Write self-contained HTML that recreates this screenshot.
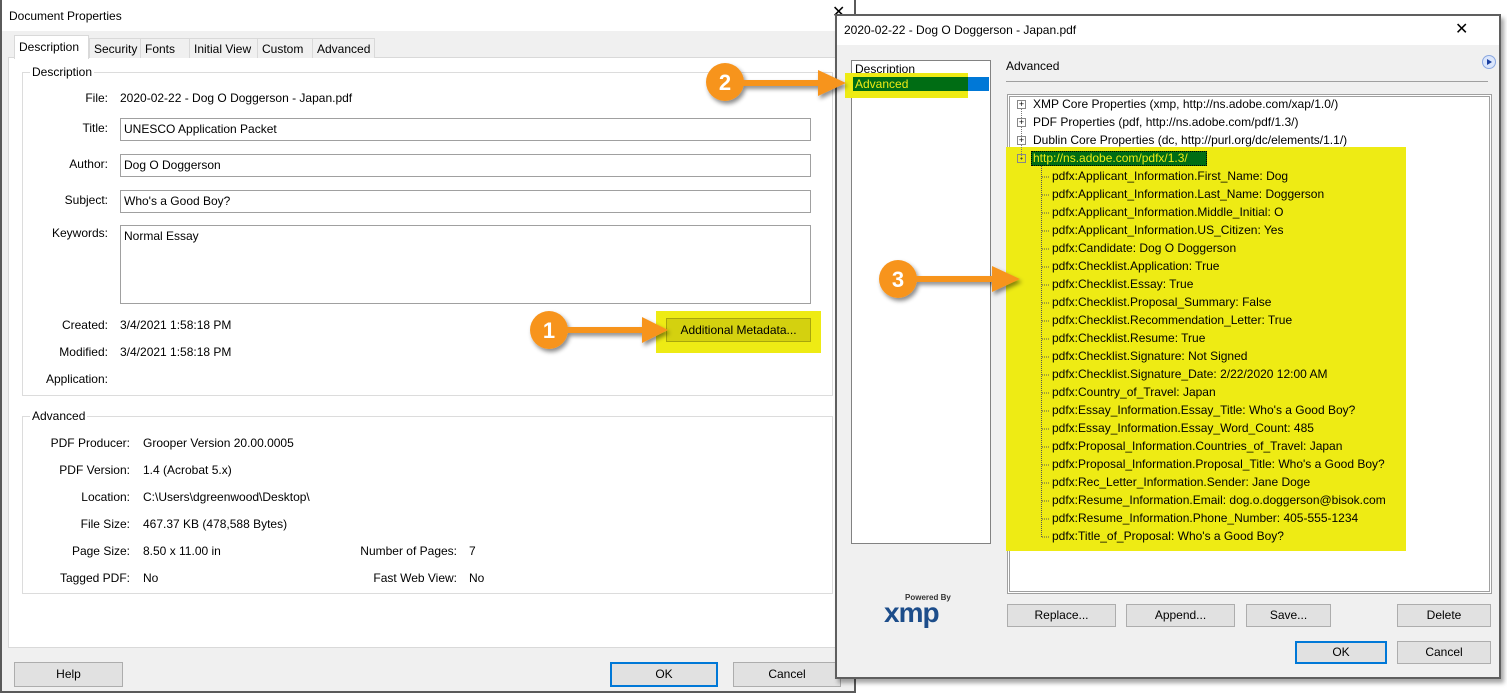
<!DOCTYPE html>
<html><head><meta charset="utf-8"><style>
*{box-sizing:border-box;margin:0;padding:0}
body{width:1507px;height:693px;background:#fff;position:relative;overflow:hidden;font-family:"Liberation Sans",sans-serif;font-size:12px;color:#000}
.a{position:absolute;white-space:nowrap}
.lbl{position:absolute;text-align:right;white-space:nowrap}
.inp{position:absolute;background:#fff;border:1px solid #a0a0a0;padding:3px 3px;}
.btn{position:absolute;background:#e1e1e1;border:1px solid #adadad;text-align:center;line-height:22px}
.grp{position:absolute;border:1px solid #dcdcdc}
.grp span{position:absolute;top:-8px;left:7px;background:#fff;padding:0 2px}
.tab{position:absolute;top:38px;height:20px;border:1px solid #d9d9d9;border-bottom:none;background:#f0f0f0;padding:3px 4px 0 4px}
.row{position:absolute;left:1052px;white-space:nowrap}
.dot{position:absolute;border-top:1px dotted #777;width:8px}
</style></head><body>
<!-- LEFT DIALOG -->
<div class="a" style="left:0;top:0;width:856px;height:693px;background:#f0f0f0;border:2px solid #5a5a5a;border-top:none"></div>
<div class="a" style="left:2px;top:0;width:852px;height:31px;background:#fff"></div>
<div class="a" style="left:9px;top:9px;font-size:12px">Document Properties</div>
<div class="a" style="left:832px;top:2px;font-size:16px">✕</div>
<div class="a" style="left:8px;top:57px;width:838px;height:591px;background:#fff;border:1px solid #d9d9d9"></div>
<div class="tab" style="left:89px;width:52px">Security</div>
<div class="tab" style="left:140px;width:50px">Fonts</div>
<div class="tab" style="left:189px;width:69px">Initial View</div>
<div class="tab" style="left:257px;width:56px">Custom</div>
<div class="tab" style="left:312px;width:63px">Advanced</div>
<div class="tab" style="left:14px;top:35px;width:75px;height:24px;background:#fff;padding-top:4px">Description</div>

<div class="grp" style="left:22px;top:72px;width:811px;height:324px"><span>Description</span></div>
<div class="lbl" style="right:1399px;top:91px">File:</div>
<div class="a" style="left:120px;top:91px">2020-02-22 - Dog O Doggerson - Japan.pdf</div>
<div class="lbl" style="right:1399px;top:121px">Title:</div>
<div class="inp" style="left:120px;top:118px;width:691px;height:23px">UNESCO Application Packet</div>
<div class="lbl" style="right:1399px;top:157px">Author:</div>
<div class="inp" style="left:120px;top:154px;width:691px;height:23px">Dog O Doggerson</div>
<div class="lbl" style="right:1399px;top:193px">Subject:</div>
<div class="inp" style="left:120px;top:190px;width:691px;height:23px">Who's a Good Boy?</div>
<div class="lbl" style="right:1399px;top:226px">Keywords:</div>
<div class="inp" style="left:120px;top:225px;width:691px;height:79px">Normal Essay</div>
<div class="lbl" style="right:1399px;top:318px">Created:</div>
<div class="a" style="left:120px;top:318px">3/4/2021 1:58:18 PM</div>
<div class="lbl" style="right:1399px;top:345px">Modified:</div>
<div class="a" style="left:120px;top:345px">3/4/2021 1:58:18 PM</div>
<div class="lbl" style="right:1399px;top:372px">Application:</div>
<div class="a" style="left:656px;top:311px;width:165px;height:42px;background:#eeeb14"></div>
<div class="btn" style="left:666px;top:318px;width:145px;height:24px;background:#d4d10f;border-color:#a8a60c">Additional Metadata...</div>

<div class="grp" style="left:22px;top:416px;width:811px;height:178px"><span>Advanced</span></div>
<div class="lbl" style="right:1377px;top:436px">PDF Producer:</div><div class="a" style="left:143px;top:436px">Grooper Version 20.00.0005</div>
<div class="lbl" style="right:1377px;top:463px">PDF Version:</div><div class="a" style="left:143px;top:463px">1.4 (Acrobat 5.x)</div>
<div class="lbl" style="right:1377px;top:490px">Location:</div><div class="a" style="left:143px;top:490px">C:\Users\dgreenwood\Desktop\</div>
<div class="lbl" style="right:1377px;top:517px">File Size:</div><div class="a" style="left:143px;top:517px">467.37 KB (478,588 Bytes)</div>
<div class="lbl" style="right:1377px;top:544px">Page Size:</div><div class="a" style="left:143px;top:544px">8.50 x 11.00 in</div>
<div class="lbl" style="right:1377px;top:571px">Tagged PDF:</div><div class="a" style="left:143px;top:571px">No</div>
<div class="lbl" style="right:1050px;top:544px">Number of Pages:</div><div class="a" style="left:469px;top:544px">7</div>
<div class="lbl" style="right:1050px;top:571px">Fast Web View:</div><div class="a" style="left:469px;top:571px">No</div>

<div class="btn" style="left:14px;top:662px;width:109px;height:25px">Help</div>
<div class="btn" style="left:610px;top:662px;width:108px;height:25px;border:2px solid #0078d7;line-height:21px">OK</div>
<div class="btn" style="left:733px;top:662px;width:108px;height:25px">Cancel</div>

<!-- RIGHT DIALOG -->
<div class="a" style="left:838px;top:18px;width:666px;height:665px;background:rgba(0,0,0,.35);filter:blur(2px)"></div>
<div class="a" style="left:835px;top:14px;width:666px;height:665px;background:#f0f0f0;border:2px solid #5f5f5f"></div>
<div class="a" style="left:837px;top:16px;width:662px;height:29px;background:#fff"></div>
<div class="a" style="left:844px;top:23px">2020-02-22 - Dog O Doggerson - Japan.pdf</div>
<div class="a" style="left:1455px;top:19px;font-size:16px">✕</div>

<div class="a" style="left:851px;top:60px;width:140px;height:484px;background:#fff;border:1px solid #828282"></div>
<div class="a" style="left:855px;top:62px">Description</div>
<div class="a" style="left:845px;top:73px;width:123px;height:25px;background:#eeeb14"></div>
<div class="a" style="left:853px;top:77px;width:115px;height:14px;background:#006d14"></div>
<div class="a" style="left:968px;top:77px;width:21px;height:14px;background:#0078d7"></div>
<div class="a" style="left:855px;top:77px;color:#eeeb14;line-height:14px">Advanced</div>

<div class="a" style="left:1006px;top:59px">Advanced</div>
<div class="a" style="left:1006px;top:81px;width:482px;height:1px;background:#a0a0a0"></div>
<div class="a" style="left:1482px;top:55px;width:14px;height:14px;border-radius:50%;background:#dbe6fb;border:1px solid #8aa7e0"></div>
<div class="a" style="left:1487px;top:59px;width:0;height:0;border-left:5px solid #1a3fa0;border-top:3px solid transparent;border-bottom:3px solid transparent"></div>

<div class="a" style="left:1007px;top:94px;width:485px;height:500px;background:#fff;border:3px double #a0a0a0"></div>
<div class="a" style="left:1006px;top:147px;width:400px;height:404px;background:#eeeb14"></div>
<div class="a" style="left:1021px;top:108px;height:52px;border-left:1px dotted #777"></div>
<div class="a" style="left:1017px;top:100px;width:9px;height:9px;border:1px solid #888;background:#fff;font-size:9px;line-height:7px;text-align:center">+</div>
<div class="a" style="left:1017px;top:118px;width:9px;height:9px;border:1px solid #888;background:#fff;font-size:9px;line-height:7px;text-align:center">+</div>
<div class="a" style="left:1017px;top:136px;width:9px;height:9px;border:1px solid #888;background:#fff;font-size:9px;line-height:7px;text-align:center">+</div>
<div class="a" style="left:1017px;top:154px;width:9px;height:9px;border:1px solid #888;font-size:9px;line-height:6px;text-align:center">-</div>
<div class="a" style="left:1033px;top:97px">XMP Core Properties (xmp, http://ns.adobe.com/xap/1.0/)</div>
<div class="a" style="left:1033px;top:115px">PDF Properties (pdf, http://ns.adobe.com/pdf/1.3/)</div>
<div class="a" style="left:1033px;top:133px">Dublin Core Properties (dc, http://purl.org/dc/elements/1.1/)</div>
<div class="a" style="left:1031px;top:151px;width:176px;height:15px;background:#006d14;border:1px dotted #000"></div>
<div class="a" style="left:1033px;top:151px;color:#eeeb14">http://ns.adobe.com/pdfx/1.3/</div>
<div class="a" style="left:1041px;top:166px;height:371px;border-left:1px dotted #555"></div>
<div style="position:absolute;left:0;top:0">
<div class="row" style="top:169px">pdfx:Applicant_Information.First_Name: Dog</div>
<div class="row" style="top:187px">pdfx:Applicant_Information.Last_Name: Doggerson</div>
<div class="row" style="top:205px">pdfx:Applicant_Information.Middle_Initial: O</div>
<div class="row" style="top:223px">pdfx:Applicant_Information.US_Citizen: Yes</div>
<div class="row" style="top:241px">pdfx:Candidate: Dog O Doggerson</div>
<div class="row" style="top:259px">pdfx:Checklist.Application: True</div>
<div class="row" style="top:277px">pdfx:Checklist.Essay: True</div>
<div class="row" style="top:295px">pdfx:Checklist.Proposal_Summary: False</div>
<div class="row" style="top:313px">pdfx:Checklist.Recommendation_Letter: True</div>
<div class="row" style="top:331px">pdfx:Checklist.Resume: True</div>
<div class="row" style="top:349px">pdfx:Checklist.Signature: Not Signed</div>
<div class="row" style="top:367px">pdfx:Checklist.Signature_Date: 2/22/2020 12:00 AM</div>
<div class="row" style="top:385px">pdfx:Country_of_Travel: Japan</div>
<div class="row" style="top:403px">pdfx:Essay_Information.Essay_Title: Who's a Good Boy?</div>
<div class="row" style="top:421px">pdfx:Essay_Information.Essay_Word_Count: 485</div>
<div class="row" style="top:439px">pdfx:Proposal_Information.Countries_of_Travel: Japan</div>
<div class="row" style="top:457px">pdfx:Proposal_Information.Proposal_Title: Who's a Good Boy?</div>
<div class="row" style="top:475px">pdfx:Rec_Letter_Information.Sender: Jane Doge</div>
<div class="row" style="top:493px">pdfx:Resume_Information.Email: dog.o.doggerson@bisok.com</div>
<div class="row" style="top:511px">pdfx:Resume_Information.Phone_Number: 405-555-1234</div>
<div class="row" style="top:529px">pdfx:Title_of_Proposal: Who's a Good Boy?</div>
</div>
<svg class="a" style="left:1041px;top:170px" width="10" height="370">
<g stroke="#555" stroke-dasharray="1,1">
<line x1="1" x2="9" y1="7" y2="7"/><line x1="1" x2="9" y1="25" y2="25"/><line x1="1" x2="9" y1="43" y2="43"/><line x1="1" x2="9" y1="61" y2="61"/><line x1="1" x2="9" y1="79" y2="79"/><line x1="1" x2="9" y1="97" y2="97"/><line x1="1" x2="9" y1="115" y2="115"/><line x1="1" x2="9" y1="133" y2="133"/><line x1="1" x2="9" y1="151" y2="151"/><line x1="1" x2="9" y1="169" y2="169"/><line x1="1" x2="9" y1="187" y2="187"/><line x1="1" x2="9" y1="205" y2="205"/><line x1="1" x2="9" y1="223" y2="223"/><line x1="1" x2="9" y1="241" y2="241"/><line x1="1" x2="9" y1="259" y2="259"/><line x1="1" x2="9" y1="277" y2="277"/><line x1="1" x2="9" y1="295" y2="295"/><line x1="1" x2="9" y1="313" y2="313"/><line x1="1" x2="9" y1="331" y2="331"/><line x1="1" x2="9" y1="349" y2="349"/><line x1="1" x2="9" y1="367" y2="367"/>
</g></svg>

<div class="a" style="left:905px;top:593px;font-size:8px;font-weight:bold;color:#333">Powered By</div>
<div class="a" style="left:884px;top:597px;font-size:28px;font-weight:bold;color:#1d4d8a;letter-spacing:-1px">xmp</div>

<div class="btn" style="left:1007px;top:604px;width:109px;height:23px;line-height:21px">Replace...</div>
<div class="btn" style="left:1126px;top:604px;width:109px;height:23px;line-height:21px">Append...</div>
<div class="btn" style="left:1246px;top:604px;width:85px;height:23px;line-height:21px">Save...</div>
<div class="btn" style="left:1397px;top:604px;width:94px;height:23px;line-height:21px">Delete</div>
<div class="btn" style="left:1295px;top:641px;width:92px;height:23px;border:2px solid #0078d7;line-height:19px">OK</div>
<div class="btn" style="left:1397px;top:641px;width:94px;height:23px;line-height:21px">Cancel</div>

<!-- CALLOUTS -->
<svg class="a" style="left:0;top:0" width="1507" height="693">
<defs><filter id="s" x="-20%" y="-20%" width="150%" height="150%"><feDropShadow dx="2" dy="3" stdDeviation="2" flood-color="#000" flood-opacity=".45"/></filter></defs>
<g fill="#f7941d" filter="url(#s)">
<rect x="560" y="327" width="86" height="6"/><polygon points="642,317 668,330 642,343"/>
<circle cx="549" cy="330" r="19"/>
<rect x="735" y="80" width="90" height="6"/><polygon points="818,70 846,83 818,96"/>
<circle cx="725" cy="82" r="19"/>
<rect x="910" y="276" width="90" height="6"/><polygon points="992,266 1020,279 992,292"/>
<circle cx="898" cy="279" r="19"/>
</g>
<g fill="#fff" font-family="Liberation Sans" font-weight="bold" font-size="22" text-anchor="middle">
<text x="549" y="338">1</text><text x="725" y="90">2</text><text x="898" y="287">3</text>
</g>
</svg>
</body></html>
